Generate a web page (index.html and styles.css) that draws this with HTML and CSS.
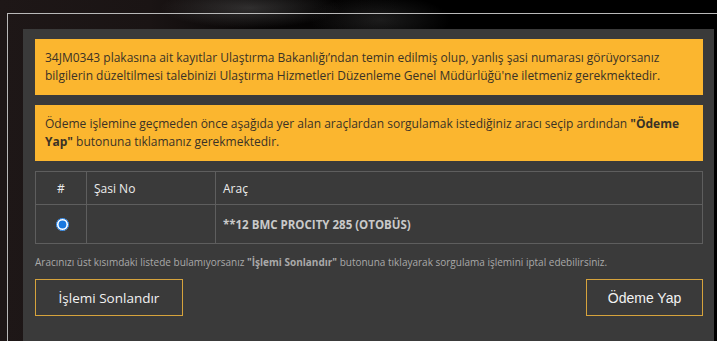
FILE: index.html
```html
<!DOCTYPE html>
<html lang="tr">
<head>
    <meta charset="UTF-8">
    <meta name="viewport" content="width=device-width, initial-scale=1.0">
    <title>Araç Seçimi</title>
    <link rel="stylesheet" href="styles.css">
</head>
<body>
    <div class="frame">
        <div class="panel">
            <!-- Info boxes -->
            <div class="alert">
                34JM0343 plakasına ait kayıtlar Ulaştırma Bakanlığı’ndan temin edilmiş olup, yanlış şasi numarası görüyorsanız bilgilerin düzeltilmesi talebinizi Ulaştırma Hizmetleri Düzenleme Genel Müdürlüğü'ne iletmeniz gerekmektedir.
            </div>
            <div class="alert">
                Ödeme işlemine geçmeden önce aşağıda yer alan araçlardan sorgulamak istediğiniz aracı seçip ardından <strong>"Ödeme Yap"</strong> butonuna tıklamanız gerekmektedir.
            </div>

            <!-- Vehicle table -->
            <table class="vehicle-table">
                <thead>
                    <tr>
                        <th class="col-select">#</th>
                        <th class="col-chassis">Şasi No</th>
                        <th>Araç</th>
                    </tr>
                </thead>
                <tbody>
                    <tr>
                        <td class="col-select"><input type="radio" name="vehicle" checked></td>
                        <td></td>
                        <td class="vehicle-name">**12 BMC PROCITY 285 (OTOBÜS)</td>
                    </tr>
                </tbody>
            </table>

            <p class="note">Aracınızı üst kısımdaki listede bulamıyorsanız <strong>"İşlemi Sonlandır"</strong> butonuna tıklayarak sorgulama işlemini iptal edebilirsiniz.</p>

            <!-- Actions -->
            <div class="actions">
                <button class="btn btn-cancel">İşlemi Sonlandır</button>
                <button class="btn btn-pay">Ödeme Yap</button>
            </div>
        </div>
    </div>
</body>
</html>
```

FILE: styles.css
```css
html, body {
    height: 100%;
}

body {
    margin: 0;
    font-family: "Open Sans", Arial, sans-serif;
    background-color: #050505;
    background-image:
        radial-gradient(ellipse 90px 20px at 250px 8px, rgba(120, 120, 120, 0.35), transparent),
        radial-gradient(ellipse 70px 25px at 380px 20px, rgba(90, 90, 90, 0.3), transparent),
        linear-gradient(90deg, #1e1717 0, #1a1414 150px, #080606 260px, #000 400px);
    overflow: hidden;
}

.frame {
    margin: 13px 0 0 7px;
    border-top: 1px solid #b9b9b9;
    border-left: 1px solid #b9b9b9;
    padding: 15px 0 0 15px;
    height: calc(100% - 13px);
    box-sizing: border-box;
}

.panel {
    background: #3a3a3a;
    margin-right: 3px;
    padding: 10px 11px 0 12px;
    height: 100%;
    box-sizing: border-box;
}

.alert {
    background: #fbb62f;
    color: #3a3226;
    font-size: 12px;
    line-height: 18px;
    padding: 10px 10px;
    margin-bottom: 10px;
}

.alert strong {
    font-weight: 700;
}

.vehicle-table {
    width: 100%;
    border-collapse: collapse;
    color: #ececec;
    font-size: 12px;
}

.vehicle-table th,
.vehicle-table td {
    border: 1px solid #5e5e5e;
    text-align: left;
    padding: 0 7px;
}

.vehicle-table th {
    height: 32px;
    font-weight: 400;
}

.vehicle-table td {
    height: 38px;
}

.vehicle-table .col-select {
    width: 36px;
    text-align: center;
}

.vehicle-table .col-chassis {
    width: 114px;
}

.vehicle-table input[type="radio"] {
    accent-color: #1878e0;
    width: 13px;
    height: 13px;
    margin: 4px 0 0 2px;
}

.vehicle-name {
    color: #c9c9c9;
    font-weight: 700;
    font-size: 11.5px;
}

.note {
    color: #a9a9a9;
    font-size: 10px;
    margin: 11px 0 10px;
}

.actions {
    display: flex;
    justify-content: space-between;
}

.btn {
    background: transparent;
    border: 1px solid #d6a33c;
    color: #f2f2f2;
    height: 37px;
    cursor: pointer;
}

.btn-cancel {
    width: 148px;
    font-family: "Open Sans", Arial, sans-serif;
    font-size: 13.5px;
}

.btn-pay {
    width: 117px;
    font-family: "Liberation Sans", Arial, sans-serif;
    font-size: 14px;
}
```
